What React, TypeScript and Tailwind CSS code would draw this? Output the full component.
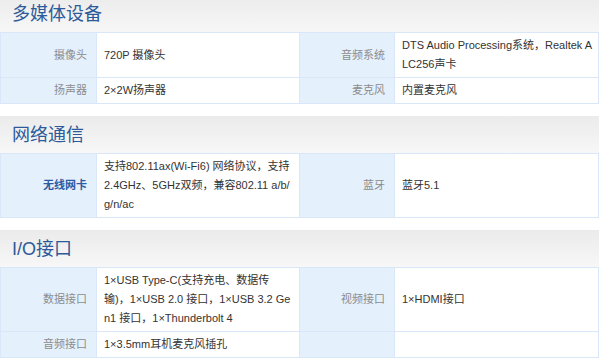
import React from 'react'

type Cell = { label: string; value: string; strong?: boolean }

const sections: { title: string; rows: Cell[][] }[] = [
    {
        title: '多媒体设备',
        rows: [
            [
                { label: '摄像头', value: '720P 摄像头' },
                { label: '音频系统', value: 'DTS Audio Processing系统，Realtek ALC256声卡' },
            ],
            [
                { label: '扬声器', value: '2×2W扬声器' },
                { label: '麦克风', value: '内置麦克风' },
            ],
        ],
    },
    {
        title: '网络通信',
        rows: [
            [
                {
                    label: '无线网卡',
                    value: '支持802.11ax(Wi-Fi6) 网络协议，支持2.4GHz、5GHz双频，兼容802.11 a/b/g/n/ac',
                    strong: true,
                },
                { label: '蓝牙', value: '蓝牙5.1' },
            ],
        ],
    },
    {
        title: 'I/O接口',
        rows: [
            [
                {
                    label: '数据接口',
                    value: '1×USB Type-C(支持充电、数据传输)，1×USB 2.0 接口，1×USB 3.2 Gen1 接口，1×Thunderbolt 4',
                },
                { label: '视频接口', value: '1×HDMI接口' },
            ],
            [
                { label: '音频接口', value: '1×3.5mm耳机麦克风插孔' },
                { label: '', value: '' },
            ],
        ],
    },
]

export default function App() {
    return (
        <div
            className="w-[599px] bg-white -mt-[5px]"
            style={{ fontFamily: '"Liberation Sans", Arial, "Noto Sans CJK SC", sans-serif' }}
        >
            {sections.map((s) => (
                <div key={s.title} className="mb-3">
                    <div className="h-[37px] flex items-center pl-3 bg-linear-to-b from-[#ebebeb] to-[#f7f7f7]">
                        <h2 className="text-[18px] leading-none text-[#2c5a9a] font-normal">{s.title}</h2>
                    </div>
                    <table className="w-full table-fixed border-collapse text-[11px] leading-[19px]">
                        <colgroup>
                            <col className="w-[96px]" />
                            <col className="w-[203px]" />
                            <col className="w-[95px]" />
                            <col />
                        </colgroup>
                        <tbody>
                            {s.rows.map((row, ri) => (
                                <tr key={ri}>
                                    {row.map((c, ci) => (
                                        <React.Fragment key={ci}>
                                            <td
                                                className={`border border-[#d9e7f8] bg-[#e5f0fd] text-right pr-[9px] py-[3px] align-middle ${
                                                    c.strong ? 'font-bold text-[#2b5ba3]' : 'text-[#8c8c8c]'
                                                }`}
                                            >
                                                {c.label}
                                            </td>
                                            <td className="border border-[#d9e7f8] bg-white pl-[7px] pr-[5px] py-[3px] text-[#333] break-all align-middle">
                                                {c.value}
                                            </td>
                                        </React.Fragment>
                                    ))}
                                </tr>
                            ))}
                        </tbody>
                    </table>
                </div>
            ))}
        </div>
    )
}
